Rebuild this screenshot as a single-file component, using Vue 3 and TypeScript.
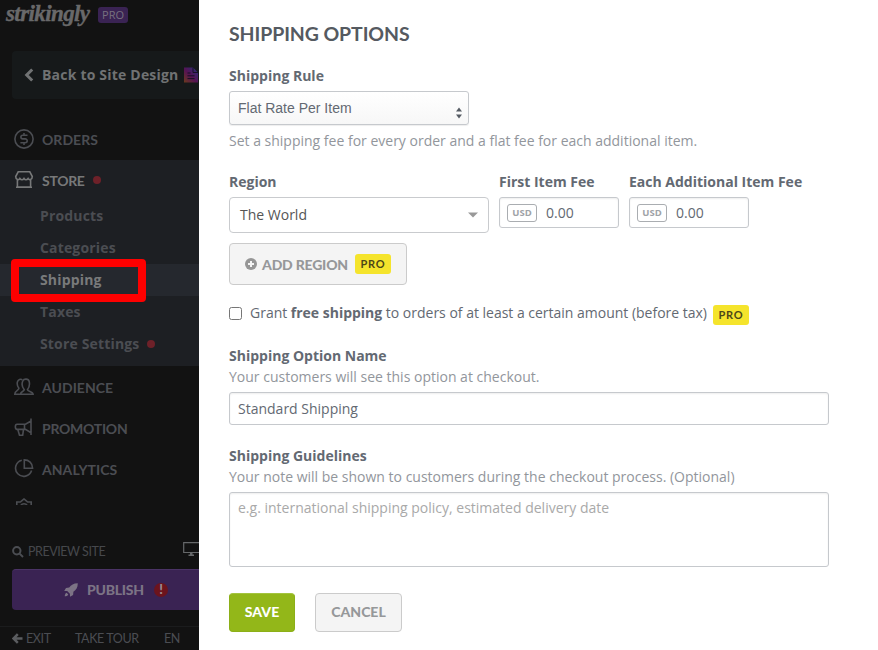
<script setup lang="ts">
import { ref } from 'vue'

interface SubItem {
  label: string
  active?: boolean
  dot?: boolean
}

const storeItems: SubItem[] = [
  { label: 'Products' },
  { label: 'Categories' },
  { label: 'Shipping', active: true },
  { label: 'Taxes' },
  { label: 'Store Settings', dot: true },
]

const fees = [
  { label: 'First Item Fee', currency: 'USD', amount: '0.00' },
  { label: 'Each Additional Item Fee', currency: 'USD', amount: '0.00' },
]

const optionName = ref('Standard Shipping')
const guidelines = ref('')
const freeShipping = ref(false)
</script>

<template>
  <div class="page">
    <aside class="sidebar">
      <header class="brand">
        <span class="logo">strikingly</span>
        <span class="plan">PRO</span>
      </header>

      <div class="back">
        <svg class="chevron" width="10" height="14" viewBox="0 0 10 14"><path d="M8.2 1.5 2.7 7l5.5 5.5" /></svg>
        <span class="back-text">Back to Site Design</span>
        <svg class="doc" width="14" height="16" viewBox="0 0 14 16">
          <defs>
            <linearGradient id="docfill" x1="0" y1="1" x2="1" y2="0">
              <stop offset="0" stop-color="#6b3a1c" />
              <stop offset="0.45" stop-color="#571353" />
              <stop offset="1" stop-color="#25307c" />
            </linearGradient>
          </defs>
          <path d="M0 .5h9l5 5v10H0z" fill="url(#docfill)" />
          <path d="M9 .5v5h5M3.500 6h3M3.500 8.800h7M3.500 11.600h7" fill="none" stroke="#161125" stroke-width="1" />
        </svg>
      </div>

      <nav class="nav">
        <div class="item orders">
          <svg class="icon" viewBox="0 0 20 20">
            <circle cx="10" cy="10" r="9.1" />
            <path d="M13.5 6.3H8.7a1.8 1.8 0 0 0 0 3.6h2.6a1.9 1.9 0 0 1 0 3.8H6.4M10 4v2.2M10 13.8V16" />
          </svg>
          <span>ORDERS</span>
        </div>

        <div class="group">
          <div class="item store">
            <svg class="icon" viewBox="0 0 20 20">
              <path d="M4.200 1.800h11.600L18.300 6.500c0 3.400-3.200 4-4.200 2-1.200 1.700-3 1.700-4.100 0-1.100 1.700-2.900 1.700-4.100 0-1 2-4.200 1.400-4.200-2zM3.400 9.600v7.400h13.200V9.600M2 17.200h16" />
            </svg>
            <span>STORE</span>
            <i class="dot"></i>
          </div>
          <div v-for="s in storeItems" :key="s.label" class="sub" :class="{ active: s.active }">
            <span>{{ s.label }}</span>
            <i v-if="s.dot" class="dot"></i>
            <b v-if="s.active" class="marker"></b>
          </div>
        </div>

        <div class="item">
          <svg class="icon" viewBox="0 0 20 20">
            <path d="M6.500 17.200c0-2.800 3.500-2.400 3.800-4.500-2-2.300-2.900-5.500-1.500-8.700 1.200-2.700 5.700-2.500 6.400.5.700 3.100-.2 6.300-1.800 8.200.2 2 5.500 1.700 5.700 4.500zM8.300 2.800C6.800 1.600 4 2.500 3.400 5c-.5 2.300.3 4.800 1.500 6.200.3 2.200-4 2.400-4.100 6h5.700" />
          </svg>
          <span>AUDIENCE</span>
        </div>
        <div class="item promo">
          <svg class="icon" viewBox="0 0 20 20">
            <path d="M17 .5v16.400M17 3 11.500 6.200H3C.8 6.200.8 11.400 3 11.400h8.500l5.500 3.300M10.500 6.200v5.200M3.800 11.500l1.700 5.700h3.200l.8-5.700" />
          </svg>
          <span>PROMOTION</span>
        </div>
        <div class="item">
          <svg class="icon" viewBox="0 0 20 20">
            <path d="M7.800 1.200a8.200 8.200 0 1 0 9.800 10.400M10.300.900v8.300h8.300c0-5-3.800-8.300-8.300-8.300z" />
          </svg>
          <span>ANALYTICS</span>
        </div>
        <div class="cut">
          <svg width="20" height="7" viewBox="0 0 20 7">
            <path d="M2.800 9V4h3.500L8 2.600 10 1l2 1.600L13.700 4h3.500v5M7 7.200c1-2 5-2 6 0" />
          </svg>
        </div>
      </nav>

      <div class="preview">
        <svg width="12" height="12" viewBox="0 0 12 12"><circle cx="4.800" cy="4.800" r="3.700" /><path d="m7.600 7.600 3.400 3.400" /></svg>
        <span>PREVIEW SITE</span>
        <svg class="monitor" width="16" height="15" viewBox="0 0 16 15">
          <path d="M.7.700h16v9.800H.7z" /><path class="fill" d="M7 10.500h2.500v2H11V14H5.500v-1.500H7z" />
        </svg>
      </div>

      <div class="publish">
        <svg class="rocket" width="14" height="14" viewBox="0 0 14 14">
          <path d="M13.800.2C9.500.2 7.200 1.900 5.200 4.600L2 4.900.2 8l3 .1 2.700 2.700.1 3L9.100 12l.3-3.200c2.700-2 4.400-4.300 4.400-8.600zM2.600 9.700C1.200 10 .9 12 .7 13.300c1.300-.2 3.300-.5 3.600-1.900z" />
        </svg>
        <span>PUBLISH</span>
        <b class="alert">!</b>
      </div>

      <footer class="foot">
        <svg width="11" height="11" viewBox="0 0 11 11"><path d="M10.500 5.500H2M5.800 1.200 1.500 5.500l4.300 4.300" /></svg>
        <span class="exit">EXIT</span>
        <span class="tour">TAKE TOUR</span>
        <span class="lang">EN</span>
      </footer>
    </aside>

    <main class="panel">
      <h1>SHIPPING OPTIONS</h1>

      <label class="label">Shipping Rule</label>
      <div class="rule">
        <span>Flat Rate Per Item</span>
        <svg width="6" height="12" viewBox="0 0 6 12"><path d="M0 4.500 3 .5l3 4zM0 7.500h6l-3 4z" /></svg>
      </div>
      <p class="hint rule-hint">Set a shipping fee for every order and a flat fee for each additional item.</p>

      <div class="fees">
        <div class="region">
          <label class="label">Region</label>
          <div class="world">
            <span>The World</span>
            <svg width="10" height="6" viewBox="0 0 10 6"><path d="M0 .5h10l-5 5z" /></svg>
          </div>
        </div>
        <div v-for="f in fees" :key="f.label" class="fee">
          <label class="label">{{ f.label }}</label>
          <div class="money">
            <span class="cur">{{ f.currency }}</span>
            <span>{{ f.amount }}</span>
          </div>
        </div>
      </div>

      <button class="add" type="button">
        <svg width="12" height="12" viewBox="0 0 12 12"><circle cx="6" cy="6" r="6" /><path d="M6 3v6M3 6h6" /></svg>
        <span class="add-text">ADD REGION</span>
        <span class="pro">PRO</span>
      </button>

      <div class="grant">
        <input v-model="freeShipping" type="checkbox" />
        <span class="grant-text">Grant <strong>free shipping</strong> to orders of at least a certain amount (before tax)</span>
        <span class="pro">PRO</span>
      </div>

      <label class="label">Shipping Option Name</label>
      <p class="hint">Your customers will see this option at checkout.</p>
      <input v-model="optionName" class="field" type="text" />

      <label class="label">Shipping Guidelines</label>
      <p class="hint">Your note will be shown to customers during the checkout process. (Optional)</p>
      <textarea v-model="guidelines" class="area" placeholder="e.g. international shipping policy, estimated delivery date"></textarea>

      <div class="actions">
        <button class="save" type="button">SAVE</button>
        <button class="cancel" type="button">CANCEL</button>
      </div>
    </main>
  </div>
</template>

<style>
body {
  margin: 0;
  background: #fff;
}
</style>

<style scoped>
* {
  box-sizing: border-box;
}
.page {
  display: flex;
  width: 878px;
  height: 650px;
  overflow: hidden;
  font: 14px/20px 'Open Sans', sans-serif;
  color: #636972;
}
svg {
  flex: none;
}

/* Sidebar */
.sidebar {
  flex: none;
  width: 199px;
  height: 650px;
  background: #121212;
  color: #4b4d52;
  overflow: hidden;
  display: flex;
  flex-direction: column;
  white-space: nowrap;
}
.brand {
  display: flex;
  height: 51px;
  padding-left: 6px;
}
.logo {
  width: 92px;
  font: italic bold 23px/28px 'Liberation Serif', serif;
  letter-spacing: -0.6px;
  color: #69696a;
  -webkit-text-stroke: 0.4px #69696a;
}
.plan {
  width: 30px;
  height: 16px;
  margin-top: 7px;
  border-radius: 3px;
  background: #3a2353;
  color: #77717f;
  font: 11px/16px 'Open Sans', sans-serif;
  text-align: center;
}
.back {
  flex: none;
  display: flex;
  align-items: center;
  height: 48px;
  margin-left: 12px;
  padding-left: 12px;
  border-radius: 4px 0 0 4px;
  background: #16191a;
}
.chevron path {
  fill: none;
  stroke: #717374;
  stroke-width: 3;
}
.back-text {
  width: 142px;
  margin-left: 8px;
  font-weight: 700;
  letter-spacing: 0.2px;
  color: #707273;
}
.nav {
  flex: none;
  height: 408px;
  padding-top: 20px;
  display: flex;
  flex-direction: column;
}
.item {
  flex: none;
  display: flex;
  align-items: center;
  height: 41px;
  padding-left: 14px;
  font: 700 14px/20px Lato, sans-serif;
  letter-spacing: 0.05px;
}
.item > span {
  margin-left: 8px;
  padding-top: 2px;
}
.icon {
  width: 20px;
  height: 20px;
  fill: none;
  stroke: currentColor;
  stroke-width: 1.6;
}
.group {
  flex: none;
  height: 206px;
  background: #1d1f23;
}
.orders {
  height: 39px;
  margin-bottom: 2px;
}
.promo {
  letter-spacing: -0.25px;
}
.store {
  height: 40px;
  letter-spacing: -0.3px;
  color: #777879;
}
.dot {
  width: 8px;
  height: 8px;
  margin-left: 8px;
  border-radius: 50%;
  background: #6e2129;
}
.sub {
  position: relative;
  display: flex;
  align-items: center;
  height: 32px;
  padding-left: 40px;
  font-weight: 700;
  letter-spacing: 0.16px;
}
.sub.active {
  background: #25282e;
  color: #797a7b;
}
.marker {
  position: absolute;
  left: 11px;
  top: -5px;
  width: 135px;
  height: 43px;
  border: 8px solid #fe0000;
  border-radius: 4px;
}
.cut {
  height: 18px;
  padding: 9px 0 0 14px;
}
.cut svg {
  display: block;
  fill: none;
  stroke: #4b4d52;
  stroke-width: 1.6;
}
.preview {
  flex: none;
  display: flex;
  align-items: center;
  height: 62px;
  padding: 28px 0 0 12px;
  font: 12.500px/18px Lato, sans-serif;
  color: #46484c;
}
.preview svg {
  fill: none;
  stroke: #4b4d52;
  stroke-width: 2;
}
.preview span {
  width: 87px;
  margin-left: 4px;
  margin-right: 68px;
  letter-spacing: -0.45px;
}
.preview .monitor {
  margin-top: -6px;
  stroke: #66686a;
  stroke-width: 1.200;
}
.monitor .fill {
  fill: #66686a;
  stroke: none;
}
.publish {
  flex: none;
  display: flex;
  align-items: center;
  height: 41px;
  margin-left: 12px;
  padding-left: 52px;
  border-top: 1px solid #4b3366;
  border-radius: 4px 0 0 4px;
  background: #3a2353;
  color: #7c7385;
  font: 900 14px/20px Lato, sans-serif;
  letter-spacing: -0.25px;
}
.publish span {
  width: 57px;
  margin-left: 9px;
}
.rocket {
  fill: #7c7385;
}
.alert {
  width: 14px;
  height: 14px;
  margin-left: 10px;
  border-radius: 50%;
  background: #6c141d;
  color: #9b8b93;
  font: 900 13px/13px Lato, sans-serif;
  letter-spacing: 0;
  text-align: center;
}
.foot {
  flex: none;
  display: flex;
  align-items: center;
  height: 24px;
  margin-top: 16px;
  padding-left: 12px;
  border-top: 1px solid #1b1c1d;
  font: 12.500px/18px Lato, sans-serif;
  letter-spacing: -0.4px;
  color: #4b4d52;
}
.foot svg {
  fill: none;
  stroke: #5b5d60;
  stroke-width: 2.500;
}
.exit {
  width: 49px;
  margin-left: 3px;
}
.tour {
  width: 89px;
}

/* Form panel */
.panel {
  flex: 1;
  display: flex;
  flex-direction: column;
  padding: 22px 49px 0 30px;
  background: #fff;
}
h1 {
  flex: none;
  margin: 0;
  height: 44px;
  font: 700 19.500px/24px Lato, sans-serif;
  letter-spacing: -0.1px;
  color: #555a61;
}
.label {
  display: block;
  height: 20px;
  font-weight: 700;
  color: #636972;
}
.hint {
  margin: 0;
  height: 26px;
  line-height: 22px;
  color: #92969c;
}
.rule {
  display: flex;
  justify-content: space-between;
  align-items: center;
  width: 240px;
  height: 34px;
  margin-top: 5px;
  padding: 0 6px 0 8px;
  border: 1px solid #c6c9cd;
  border-radius: 3px;
  background: linear-gradient(#fff, #f7f7f7);
  box-shadow: 0 1px 1px #eee;
  font: 14px/20px 'Liberation Sans', sans-serif;
}
.rule svg {
  margin-top: 9px;
  fill: #555b63;
}
.rule-hint {
  height: 42px;
  margin-top: 5px;
}
.fees {
  display: flex;
  gap: 10px;
  height: 71px;
}
.region {
  width: 260px;
}
.fee {
  width: 120px;
  white-space: nowrap;
}
.world {
  display: flex;
  justify-content: space-between;
  align-items: center;
  height: 36px;
  margin-top: 5px;
  padding: 0 10px;
  border: 1px solid #c9cbce;
  border-radius: 4px;
  color: #555;
}
.world svg {
  fill: #999;
}
.money {
  display: flex;
  align-items: center;
  height: 31px;
  margin-top: 5px;
  padding-left: 7px;
  border: 1px solid #c6c9cd;
  border-radius: 3px;
  box-shadow: inset 0 1px 2px #eee;
}
.cur {
  width: 30px;
  height: 18px;
  margin-right: 9px;
  border: 1px solid #aaadb1;
  border-radius: 3px;
  font-size: 9.500px;
  font-weight: 700;
  line-height: 16px;
  text-align: center;
  color: #a0a3a7;
}
button {
  border: 1px solid #cbcbcb;
  border-radius: 4px;
  background: #f4f4f4;
  color: #96989a;
  font: 900 14px/20px Lato, sans-serif;
}
.add {
  flex: none;
  display: flex;
  align-items: center;
  width: 178px;
  height: 42px;
  padding: 0 0 0 15px;
}
.add svg {
  fill: #969696;
}
.add svg path {
  stroke: #f4f4f4;
  stroke-width: 2;
}
.add-text {
  width: 87px;
  margin: 1px 6px 0 5px;
  letter-spacing: -0.2px;
  text-align: left;
  white-space: nowrap;
}
.pro {
  width: 36px;
  height: 20px;
  border-radius: 3px;
  background: #f5e42c;
  color: #4c4718;
  font: 700 11px/19px Lato, sans-serif;
  letter-spacing: 0.700px;
  text-align: center;
}
.grant {
  display: flex;
  height: 61px;
  padding-top: 18px;
}
.grant input {
  width: 13px;
  height: 13px;
  margin: 4px 8px 0 0;
}
.grant-text {
  width: 457px;
  margin-right: 6px;
  letter-spacing: -0.01px;
  white-space: nowrap;
}
.grant .pro {
  margin-top: 2px;
}
.field,
.area {
  display: block;
  flex: none;
  width: 600px;
  margin: 0;
  padding: 0 8px;
  border: 1px solid #c6c9cd;
  border-radius: 3px;
  box-shadow: inset 0 1px 2px #eee;
  background: #fff;
  font: 14px/20px 'Open Sans', sans-serif;
  color: #636972;
  outline: none;
  resize: none;
}
.field {
  height: 33px;
  margin-bottom: 21px;
}
.area {
  height: 75px;
  padding-top: 5px;
}
.area::placeholder {
  color: #a9a9a9;
}
.actions {
  display: flex;
  gap: 20px;
  margin-top: 26px;
}
.save,
.cancel {
  height: 39px;
  padding: 0 0 2px;
}
.save {
  width: 66px;
  border-color: #8caf18;
  border-top-color: #a4c43e;
  background: #93b719;
  color: #fff;
}
.cancel {
  width: 87px;
}
</style>
